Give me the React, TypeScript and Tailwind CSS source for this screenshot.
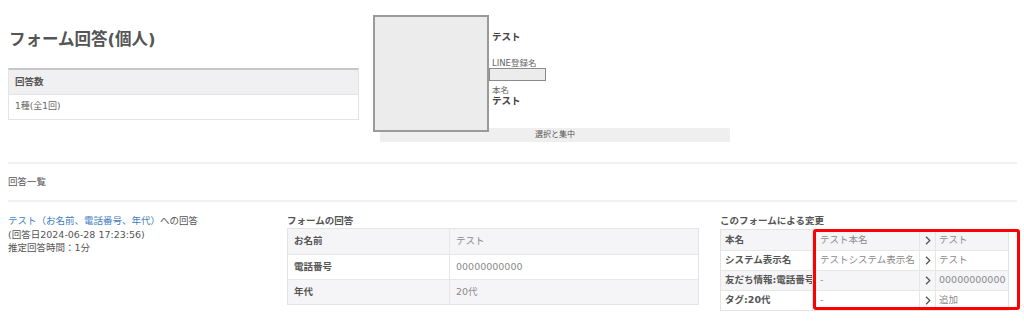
import React from 'react';

const answers = [
  { label: 'お名前', value: 'テスト' },
  { label: '電話番号', value: '00000000000' },
  { label: '年代', value: '20代' },
];

const changes = [
  { label: '本名', before: 'テスト本名', after: 'テスト' },
  { label: 'システム表示名', before: 'テストシステム表示名', after: 'テスト' },
  { label: '友だち情報:電話番号', before: '-', after: '00000000000' },
  { label: 'タグ:20代', before: '-', after: '追加' },
];

export default function App() {
  return (
    <div
      className="w-[1024px] h-[326px] overflow-hidden bg-white text-[#555] pl-[8px] pr-[7px]"
      style={{ fontFamily: '"DejaVu Sans", "Noto Sans CJK JP", sans-serif' }}
    >
      {/* Top area */}
      <div className="flex items-start h-[142px]">
        <div className="w-[351px]">
          <h1 className="mt-[28px] text-[16.5px] leading-[24px] font-bold text-[#555] pl-[1px]">
            フォーム回答(個人)
          </h1>
          <div className="mt-[16px] border border-[#e4e4e4] border-t-2 border-t-[#c6c6c6]">
            <div className="h-[25px] bg-[#f0f0f2] border-b border-[#e4e4e4] flex items-center px-[6px] text-[9.5px] font-bold">
              回答数
            </div>
            <div className="h-[24px] flex items-center px-[6px] text-[9px] text-[#666]">1種(全1回)</div>
          </div>
        </div>

        {/* Profile card */}
        <div className="ml-[14px] mt-[15px]">
          <div className="flex items-start">
            <div className="relative z-10 w-[116px] h-[117px] bg-[#ececec] border-2 border-[#9a9a9a]" />
            <div className="flex flex-col pl-[3px]">
              <span className="mt-[15px] text-[9.5px] leading-[14px] font-bold text-[#444]">テスト</span>
              <span className="mt-[14px] text-[8.5px] leading-[10px] text-[#666]">LINE登録名</span>
              <div className="-ml-[3px] w-[57px] h-[13px] bg-[#ececec] border border-[#8a8a8a]" />
              <span className="mt-[4px] text-[8.5px] leading-[10px] text-[#666]">本名</span>
              <span className="text-[9.5px] leading-[12px] font-bold text-[#444]">テスト</span>
            </div>
          </div>
          <div className="-mt-[4px] ml-[7px] w-[350px] h-[14px] bg-[#efefef] text-center text-[8px] leading-[14px] text-[#555]">
            選択と集中
          </div>
        </div>
      </div>

      <div className="mt-[20px] h-[2px] bg-[#f2f2f2]" />
      <div className="mt-[11px] text-[9.5px] leading-[14px]">回答一覧</div>
      <div className="mt-[11px] h-[2px] bg-[#f2f2f2]" />

      {/* Answer detail */}
      <div className="mt-[12px] flex items-start">
        <div className="w-[279px] text-[9.5px] leading-[13.5px] text-[#555]">
          <div>
            <span className="text-[#3f7fc1]">テスト（お名前、電話番号、年代）</span>への回答
          </div>
          <div>(回答日2024-06-28 17:23:56)</div>
          <div>推定回答時間：1分</div>
        </div>

        <div className="w-[412px] mr-[21px]">
          <div className="text-[9.5px] leading-[14px] font-bold">フォームの回答</div>
          <div className="border border-[#e4e4e4]">
            {answers.map((a, i) => (
              <div
                key={a.label}
                className={`flex h-[25px] items-center text-[9.5px] ${i > 0 ? 'border-t border-[#e6e6e6]' : ''} ${
                  i % 2 === 0 ? 'bg-[#f5f5f7]' : 'bg-white'
                }`}
              >
                <div className="w-[162px] h-full flex items-center px-[6px] font-bold border-r border-[#e6e6e6]">
                  {a.label}
                </div>
                <div className="flex-1 px-[6px] text-[#8a8a8a]">{a.value}</div>
              </div>
            ))}
          </div>
        </div>

        <div className="w-[289px]">
          <div className="text-[9.5px] leading-[14px] font-bold">このフォームによる変更</div>
          <div className="relative mt-[1px]">
            <div className="border border-[#e4e4e4]">
              {changes.map((c, i) => (
                <div
                  key={c.label}
                  className={`flex h-[20px] items-center text-[9.5px] whitespace-nowrap ${
                    i > 0 ? 'border-t border-[#e6e6e6]' : ''
                  } ${i % 2 === 0 ? 'bg-[#f5f5f7]' : 'bg-white'}`}
                >
                  <div className="w-[92px] h-full flex items-center pl-[4px] font-bold overflow-hidden border-r border-[#e6e6e6]">
                    {c.label}
                  </div>
                  <div className="w-[107px] h-full flex items-center pl-[7px] text-[#8a8a8a] overflow-hidden border-r border-[#e6e6e6]">
                    {c.before}
                  </div>
                  <div className="w-[16px] h-full flex items-center justify-center border-r border-[#e6e6e6]">
                    <svg width="6" height="9" viewBox="0 0 6 9" fill="none">
                      <path d="M1 0.8 L4.8 4.5 L1 8.2" stroke="#555" strokeWidth="1.3" />
                    </svg>
                  </div>
                  <div className="flex-1 pl-[3px] text-[#8a8a8a] overflow-hidden">{c.after}</div>
                </div>
              ))}
            </div>
            {/* Highlight annotation */}
            <div className="absolute left-[93px] top-0 w-[207px] h-[81px] border-[3px] border-[#ff0000] rounded-[3px] pointer-events-none" />
          </div>
        </div>
      </div>
    </div>
  );
}
